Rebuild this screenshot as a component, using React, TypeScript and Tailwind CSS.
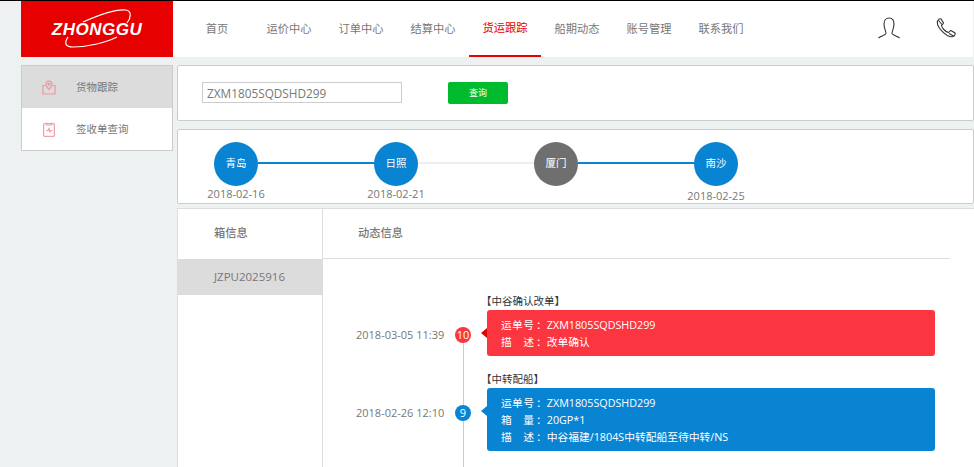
import React from 'react'

const FONT = '[font-family:"Open_Sans","Noto_Sans_CJK_SC",sans-serif]'

const navItems = ['首页', '运价中心', '订单中心', '结算中心', '货运跟踪', '船期动态', '账号管理', '联系我们']

const stops = [
    { name: '青岛', date: '2018-02-16', line: 'bg-[#0984d3]', color: 'bg-[#0984d3]', dateClass: 'mt-[0px]' },
    { name: '日照', date: '2018-02-21', line: 'bg-[#eeeeee]', color: 'bg-[#0984d3]', dateClass: 'mt-[0px]' },
    { name: '厦门', date: '', line: 'bg-[#0984d3]', color: 'bg-[#6f6f6f]', dateClass: 'mt-[0px]' },
    { name: '南沙', date: '2018-02-25', line: '', color: 'bg-[#0984d3]', dateClass: 'mt-[2px]' },
]

const Logo = () => (
    <div className="relative w-[152px] h-[56px] bg-[#e60000] flex items-center justify-center shrink-0 overflow-hidden">
        <span className='text-white italic font-bold text-[17px] tracking-[0.5px] leading-none mt-[1px] [font-family:"Liberation_Sans",sans-serif]'>ZHONGGU</span>
        {/* swoosh */}
        <svg className="absolute left-0 top-0" width="152" height="56" viewBox="0 0 152 56" fill="none">
            <path d="M62 21 C80 13 97 8 105 9 C111 10 110 17 106 22" stroke="white" strokeWidth="1.2" />
            <path d="M47 36 C43 42 44 46 52 46 C66 46 84 42 96 36" stroke="white" strokeWidth="1.2" />
        </svg>
    </div>
)

const Sidebar = () => (
    <div className="w-[152px] h-[86px] border border-[#cccccc] bg-white shrink-0">
        <div className="h-[42px] bg-[#dcdcdc] flex items-center pl-[20px]">
            <svg width="14" height="15" viewBox="0 0 14 15" fill="none" stroke="#eb9aa1" strokeWidth="1.2">
                <path d="M3.5 5.5 H1 V14 H13 V5.5 H10.5" />
                <path d="M7 9.5 C5 7.5 4 6 4 4.2 A3 3 0 0 1 10 4.2 C10 6 9 7.5 7 9.5 Z" />
                <circle cx="7" cy="4.2" r="1" />
            </svg>
            <span className="ml-[20px] pt-[2px] text-[10.5px] text-[#777777]">货物跟踪</span>
        </div>
        <div className="h-[42px] flex items-center pl-[21px]">
            <svg width="12" height="15" viewBox="0 0 12 15" fill="none" stroke="#f0a0a8" strokeWidth="1.2">
                <rect x="0.6" y="1.6" width="10.8" height="12.8" rx="1" />
                <path d="M3.5 0.5 V3 H8.5 V0.5" />
                <path d="M3 8.5 H5 L6 6.5 L7 10 L8 8.5 H9.5" />
            </svg>
            <span className="ml-[21px] pt-[2px] text-[10.5px] text-[#777777]">签收单查询</span>
        </div>
    </div>
)

const Stop = ({ stop }: { stop: (typeof stops)[number] }) => (
    <div className="w-[160px] flex flex-col items-start">
        <div className="flex items-center w-full">
            <div className={`w-[44px] h-[44px] rounded-full shrink-0 flex items-center justify-center text-white text-[10.5px] ${stop.color}`}>
                {stop.name}
            </div>
            {stop.line && <div className={`flex-1 h-[2px] mt-[-3px] ${stop.line}`}></div>}
        </div>
        <div className={`w-[44px] h-[16px] flex justify-center whitespace-nowrap text-[11px] leading-[16px] text-[#777777] ${stop.dateClass}`}>
            {stop.date}
        </div>
    </div>
)

const Event = ({ title, date, num, color, arrow, rows, className }: {
    title: string, date: string, num: string, color: string, arrow: string,
    rows: [string, string][], className: string
}) => (
    <div className={`flex items-start ${className}`}>
        <span className="w-[87px] mt-[17px] text-[11px] leading-[16px] text-[#777777] whitespace-nowrap ml-[33px]">{date}</span>
        <div className="w-[40px] mt-[17px] flex justify-center relative z-10">
            <span className={`w-[16px] h-[16px] rounded-full text-white text-[11px] leading-[16px] flex items-center justify-center ${color}`}>{num}</span>
        </div>
        <div className="relative w-[448px] ml-[4px]">
            <div className="absolute left-[-6px] top-[-16px] text-[10.5px] leading-[14px] text-[#333333] whitespace-nowrap">{title}</div>
            <div className={`relative rounded-[3px] px-[14px] pt-[7px] pb-[5px] text-white text-[10.75px] leading-[17px] ${color}`}>
                <span className={`absolute left-[-6px] top-[18px] w-0 h-0 border-y-[5px] border-y-transparent border-r-[6px] ${arrow}`}></span>
                {rows.map(([k, v]) => (
                    <div key={k} className="flex whitespace-nowrap">
                        <span className="w-[33px] [text-align-last:justify]">{k}</span>
                        <span className="ml-[2px]">：{v}</span>
                    </div>
                ))}
            </div>
        </div>
    </div>
)

export default function App() {
    return (
        <div className={`w-[974px] h-[467px] overflow-hidden bg-[#eef1f2] border-t border-black ${FONT}`}>
            <header className="ml-[21px] w-[952px] h-[56px] bg-white flex relative">
                <Logo />
                <nav className="flex ml-[8px]">
                    {navItems.map((item) => (
                        <a key={item} className={`w-[72px] h-[56px] flex items-center justify-center text-[11.25px] ${item === '货运跟踪' ? 'text-[#e60000] border-b-2 border-[#e60000]' : 'text-[#777777]'}`}>
                            {item}
                        </a>
                    ))}
                </nav>
                <div className="ml-auto flex items-center gap-[36px] pr-[17px] pb-[2px]">
                    <svg width="22" height="22" viewBox="0 0 22 22" fill="none" stroke="#333333" strokeWidth="1.1">
                        <path d="M0.5 21 C3 19 7 18.5 8 16.5 C8.5 15.2 6 12 6 7 C6 3 8 1 11 1 C14 1 16 3 16 7 C16 12 13.5 15.2 14 16.5 C15 18.5 19 19 21.5 21" />
                    </svg>
                    <svg width="20" height="20" viewBox="0 0 20 20" fill="none" stroke="#333333" strokeWidth="1.1">
                        <path d="M1.5 3 C2.5 1.5 4 0.5 5 1 L7.5 5 C7.5 6 6 6.5 5.5 7.5 C6 10 9.5 14 12.5 14.5 C13.5 14 14 12.5 15 12.5 L19 15 C19.5 16 18.5 18 17 18.5 C11 20 0 9 1.5 3 Z" />
                        <path d="M2.5 2.5 L6.5 7 M13 15.5 L17.5 18" />
                    </svg>
                </div>
            </header>

            <div className="flex ml-[21px] mt-[8px] gap-[4px]">
                <Sidebar />
                <main className="w-[797px] flex flex-col shrink-0">
                    <section className="h-[56px] bg-white border border-[#cccccc] rounded-[2px] flex items-center pl-[24px] pb-[1px]">
                        <input
                            readOnly
                            value="ZXM1805SQDSHD299"
                            className="w-[200px] h-[21px] border border-[#cccccc] px-[4px] text-[11.8px] text-[#777777] outline-none"
                        />
                        <button className="ml-[46px] w-[60px] h-[22px] bg-[#00bb2e] rounded-[2px] text-white text-[9px]">查询</button>
                    </section>

                    <section className="mt-[8px] h-[75px] bg-white border border-[#cccccc] rounded-[2px] flex pl-[36px] pt-[12px]">
                        {stops.map((s) => <Stop key={s.name} stop={s} />)}
                    </section>

                    <section className="mt-[4px] h-[260px] bg-white border-l border-t border-[#dddddd] flex">
                        <div className="w-[145px] border-r border-[#dddddd] shrink-0">
                            <div className="h-[50px] flex items-center pl-[36px] pb-[1px] text-[11.25px] font-medium text-[#777777]">箱信息</div>
                            <div className="h-[36px] bg-[#dcdcdc] flex items-center pl-[36px] text-[11.5px] text-[#777777]">JZPU2025916</div>
                        </div>
                        <div className="flex-1 relative">
                            <div className="w-[627px] h-[50px] border-b border-[#dddddd] flex items-center pl-[35px] pb-[1px] text-[11.25px] font-medium text-[#777777]">动态信息</div>
                            {/* timeline rail */}
                            <div className="absolute left-[140px] top-[134px] bottom-0 w-px bg-[#cccccc]"></div>
                            <Event
                                className="mt-[51px]"
                                title="【中谷确认改单】"
                                date="2018-03-05 11:39"
                                num="10"
                                color="bg-[#fb3640]"
                                arrow="border-r-[#e60000]"
                                rows={[['运单号', 'ZXM1805SQDSHD299'], ['描述', '改单确认']]}
                            />
                            <Event
                                className="mt-[32px]"
                                title="【中转配船】"
                                date="2018-02-26 12:10"
                                num="9"
                                color="bg-[#0984d3]"
                                arrow="border-r-[#0984d3]"
                                rows={[['运单号', 'ZXM1805SQDSHD299'], ['箱量', '20GP*1'], ['描述', '中谷福建/1804S中转配船至待中转/NS']]}
                            />
                        </div>
                    </section>
                </main>
            </div>
        </div>
    )
}
